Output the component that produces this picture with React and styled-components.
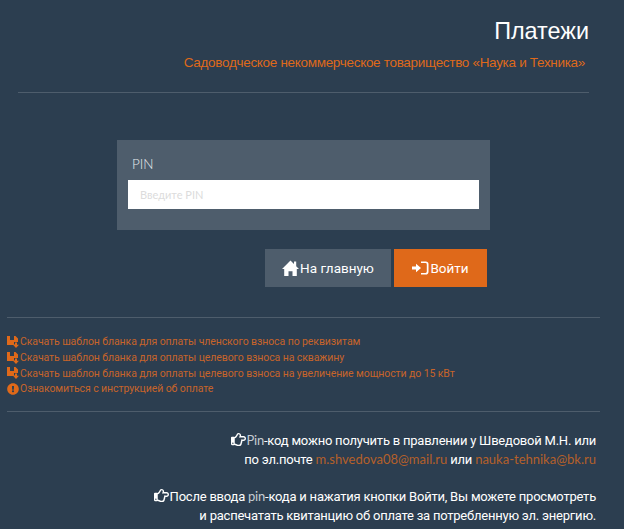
import styled, {createGlobalStyle} from "styled-components";
import {FaExclamationCircle, FaRegHandPointRight} from "react-icons/fa";

const GlobalStyle = createGlobalStyle`
  html, body {
    margin: 0;
    padding: 0;
    background: #2c3e50;
  }
  body {
    font-family: Lato, Roboto, "Liberation Sans", sans-serif;
    color: #fff;
    overflow: hidden;
  }
`;

const Page = styled.div`
  width: 624px;
  height: 529px;
  overflow: hidden;
  background: #2c3e50;
`;

const Header = styled.header`
  margin: 0 35px 0 18px;
  height: 93px;
  box-sizing: border-box;
  border-bottom: 1px solid #4e5d6c;
  text-align: right;
`;

const Title = styled.h1`
  margin: 0;
  padding-top: 17px;
  font: 400 23.4px/28px "Liberation Sans", Arial, sans-serif;
  color: #fff;
`;

const Subtitle = styled.p`
  margin: 9px 4px 0 0;
  font: 400 13.5px/18px "Liberation Sans", Arial, sans-serif;
  letter-spacing: -0.31px;
  color: #df691a;
`;

const LoginBlock = styled.section`
  width: 373px;
  margin: 47px 0 0 117px;
`;

const Panel = styled.div`
  height: 90px;
  box-sizing: border-box;
  padding: 15px 11px 0;
  background: #4e5d6c;
`;

const Label = styled.label`
  display: block;
  margin-left: 4px;
  font-size: 13.5px;
  font-weight: 300;
  line-height: 18px;
  color: #e4e9ed;
`;

const PinInput = styled.input`
  display: block;
  width: 100%;
  height: 29px;
  margin-top: 7px;
  padding: 0 12px;
  box-sizing: border-box;
  border: 0;
  border-radius: 0;
  background: #fff;
  font-family: Lato, Roboto, sans-serif;
  font-size: 11px;
  &::placeholder {
    color: #dcdcdc;
    opacity: 1;
  }
`;

const Buttons = styled.div`
  display: flex;
  gap: 3px;
  margin: 19px 0 0 148px;
`;

const Button = styled.button`
  display: flex;
  align-items: center;
  justify-content: center;
  gap: 1px;
  width: ${p => p.$width}px;
  height: 38px;
  padding: 0;
  border: 0;
  border-radius: 0;
  background: ${p => (p.$primary ? "#df691a" : "#4e5d6c")};
  color: #fff;
  font-family: Roboto, sans-serif;
  font-size: 13.5px;
  svg {
    flex: none;
  }
`;

const Divider = styled.hr`
  margin: ${p => p.$top}px 24px 0 7px;
  border: 0;
  border-top: 1px solid #4e5d6c;
`;

const Links = styled.ul`
  list-style: none;
  margin: 16px 0 0 7px;
  padding: 0;
`;

const LinkItem = styled.li`
  display: flex;
  align-items: center;
  height: 15.7px;
  gap: 1px;
  font-family: Roboto, sans-serif;
  font-size: 10.5px;
  letter-spacing: -0.09px;
  color: #c7642a;
  svg {
    color: #df691a;
    flex: none;
  }
`;

const Notes = styled.div`
  margin: 19px 28px 0 0;
  text-align: right;
`;

const Note = styled.p`
  margin: 0 0 18px;
  font-family: Roboto, sans-serif;
  font-size: 13px;
  line-height: 19px;
  letter-spacing: -0.22px;
  color: #fff;
  svg {
    vertical-align: -2px;
    margin-right: 1px;
  }
`;

const Latin = styled.span`
  font-family: Lato, sans-serif;
  color: #c5ccd3;
`;

const Mail = styled.a`
  font-family: Lato, sans-serif;
  font-size: 13px;
  letter-spacing: 0;
  color: #b5602a;
  text-decoration: none;
`;

const DownloadIcon = () => (
  <svg width="12" height="12" viewBox="0 0 12 12" fill="currentColor">
    <path d="M0 0h3v4h4V0h1.5L11 2.5V6H7v2.5H8.5V9H0z" />
    <path d="M8 6.5h2v2.2h2L9 12 6 8.7h2z" />
  </svg>
);

const HomeIcon = () => (
  <svg width="17" height="16" viewBox="0 0 17 16" fill="#fff">
    <path d="M8.5 0.5L12 4V1.5h2.2v4.7L17 9h-2.2v7H10.5v-4.8h-4V16H2.2V9H0z" />
  </svg>
);

const LoginIcon = () => (
  <svg width="17" height="14" viewBox="0 0 17 14" fill="#fff">
    <path d="M0 5.4h4V2.8L9 7l-5 4.2V8.6H0z" />
    <path d="M9 0.5h4.7A2.8 2.8 0 0 1 16.5 3.3v7.4a2.8 2.8 0 0 1-2.8 2.8H9v-1.6h4.5a1.3 1.3 0 0 0 1.3-1.3V3.4a1.3 1.3 0 0 0-1.3-1.3H9z" />
  </svg>
);

const links = [
  "Скачать шаблон бланка для оплаты членского взноса по реквизитам",
  "Скачать шаблон бланка для оплаты целевого взноса на скважину",
  "Скачать шаблон бланка для оплаты целевого взноса на увеличение мощности до 15 кВт",
];

const App = () => {
  return (
    <Page>
      <GlobalStyle />
      <Header>
        <Title>Платежи</Title>
        <Subtitle>Садоводческое некоммерческое товарищество «Наука и Техника»</Subtitle>
      </Header>

      <LoginBlock>
        <Panel>
          <Label htmlFor="pin">PIN</Label>
          <PinInput id="pin" placeholder="Введите PIN" />
        </Panel>
        <Buttons>
          <Button $width={126}><HomeIcon />На главную</Button>
          <Button $width={93} $primary><LoginIcon />Войти</Button>
        </Buttons>
      </LoginBlock>

      <Divider $top={30} />
      <Links>
        {links.map(text => (
          <LinkItem key={text}><DownloadIcon />{text}</LinkItem>
        ))}
        <LinkItem><FaExclamationCircle size={12} />Ознакомиться с инструкцией об оплате</LinkItem>
      </Links>
      <Divider $top={14} />

      <Notes>
        <Note>
          <FaRegHandPointRight size={15} /><Latin>Pin</Latin>-код можно получить в правлении у Шведовой М.Н. или<br />
          по эл.почте <Mail>m.shvedova08@mail.ru</Mail> или <Mail>nauka-tehnika@bk.ru</Mail>
        </Note>
        <Note>
          <FaRegHandPointRight size={15} />После ввода <Latin>pin</Latin>-кода и нажатия кнопки Войти, Вы можете просмотреть<br />
          и распечатать квитанцию об оплате за потребленную эл. энергию.
        </Note>
      </Notes>
    </Page>
  );
};

export default App;
